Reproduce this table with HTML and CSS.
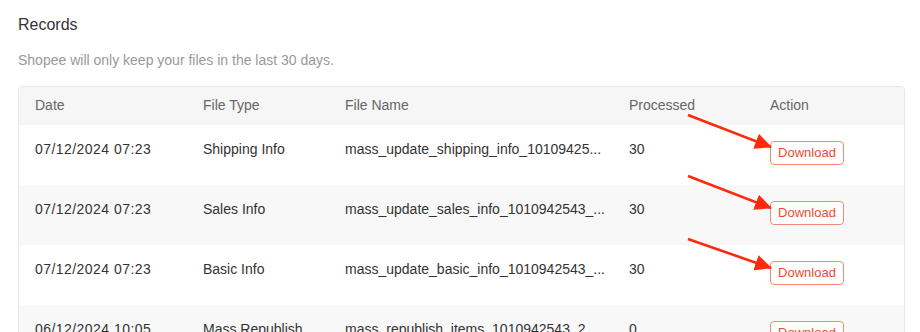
FILE: index.html
```html
<!DOCTYPE html>
<html>
<head>
<meta charset="utf-8">
<link rel="stylesheet" href="styles.css">
</head>
<body>
<div class="page">
  <h2 class="title">Records</h2>
  <p class="subtitle">Shopee will only keep your files in the last 30 days.</p>
  <div class="table">
    <div class="row head">
      <div class="cell c1">Date</div>
      <div class="cell c2">File Type</div>
      <div class="cell c3">File Name</div>
      <div class="cell c4">Processed</div>
      <div class="cell c5">Action</div>
    </div>
    <div class="row">
      <div class="cell c1"><span class="date">07/12/2024 07:23</span></div>
      <div class="cell c2">Shipping Info</div>
      <div class="cell c3">mass_update_shipping_info_10109425...</div>
      <div class="cell c4">30</div>
      <div class="cell c5"><button class="btn">Download</button></div>
    </div>
    <div class="row stripe">
      <div class="cell c1"><span class="date">07/12/2024 07:23</span></div>
      <div class="cell c2">Sales Info</div>
      <div class="cell c3">mass_update_sales_info_1010942543_...</div>
      <div class="cell c4">30</div>
      <div class="cell c5"><button class="btn">Download</button></div>
    </div>
    <div class="row">
      <div class="cell c1"><span class="date">07/12/2024 07:23</span></div>
      <div class="cell c2">Basic Info</div>
      <div class="cell c3">mass_update_basic_info_1010942543_...</div>
      <div class="cell c4">30</div>
      <div class="cell c5"><button class="btn">Download</button></div>
    </div>
    <div class="row stripe">
      <div class="cell c1"><span class="date">06/12/2024 10:05</span></div>
      <div class="cell c2">Mass Republish</div>
      <div class="cell c3">mass_republish_items_1010942543_2...</div>
      <div class="cell c4">0</div>
      <div class="cell c5"><button class="btn">Download</button></div>
    </div>
  </div>
</div>
<svg class="arrows" width="920" height="332" viewBox="0 0 920 332">
  <defs>
    <marker id="head" markerUnits="userSpaceOnUse" markerWidth="18" markerHeight="16" refX="16" refY="8" orient="auto">
      <path d="M0,0 L17,8 L0,16 z" fill="#fd2b0c"/>
    </marker>
  </defs>
  <line x1="688" y1="115" x2="771" y2="147" stroke="#fd2b0c" stroke-width="2.6" marker-end="url(#head)"/>
  <line x1="688" y1="176" x2="771" y2="208" stroke="#fd2b0c" stroke-width="2.6" marker-end="url(#head)"/>
  <line x1="688" y1="239" x2="771" y2="268" stroke="#fd2b0c" stroke-width="2.6" marker-end="url(#head)"/>
</svg>
</body>
</html>
```
FILE: styles.css
```css
html, body {
  margin: 0;
  padding: 0;
  background: #fff;
  overflow: hidden;
}
body {
  font-family: "Liberation Sans", Arial, sans-serif;
  color: #333;
}
.page {
  padding: 15px 14px 0 18px;
}
.title {
  margin: 0;
  font-size: 16px;
  line-height: 20px;
  font-weight: normal;
  color: #333;
}
.subtitle {
  margin: 15px 0 0;
  font-size: 14px;
  line-height: 20px;
  color: #999;
}
.table {
  margin-top: 16px;
  width: 887px;
  border: 1px solid #e8e8e8;
  border-radius: 4px;
  overflow: hidden;
  box-sizing: border-box;
}
.row {
  display: grid;
  grid-template-columns: 168px 142px 284px 141px 150px;
  height: 60px;
  background: #fff;
}
.row.head {
  height: 38px;
  background: #f6f6f6;
}
.row.stripe {
  background: #f8f8f8;
}
.cell {
  padding: 14px 0 0 16px;
  font-size: 14px;
  line-height: 20px;
  white-space: nowrap;
  overflow: hidden;
}
.date {
  letter-spacing: 0.45px;
}
.head .cell {
  padding-top: 8px;
  color: #666;
}
.btn {
  margin-top: 2px;
  width: 74px;
  height: 24px;
  padding: 0;
  border: 1px solid #f28a75;
  border-radius: 4px;
  background: #fff;
  color: #ee4d2d;
  font-family: "Liberation Sans", Arial, sans-serif;
  font-size: 13px;
  line-height: 22px;
  box-sizing: border-box;
}
.arrows {
  position: absolute;
  left: 0;
  top: 0;
  pointer-events: none;
}
```
